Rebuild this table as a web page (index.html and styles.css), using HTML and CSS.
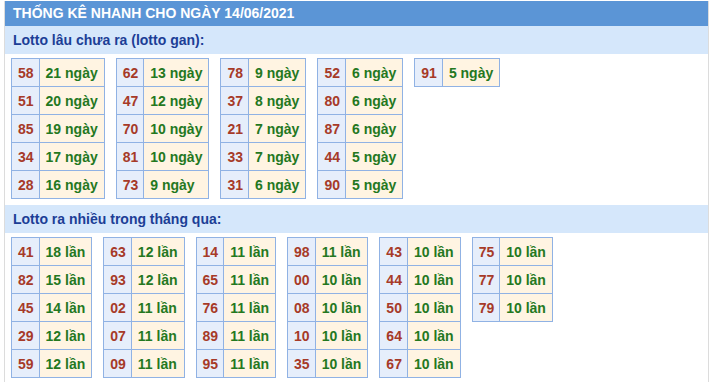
FILE: index.html
```html
<!DOCTYPE html>
<html lang="vi">
<head>
<meta charset="utf-8">
<link rel="stylesheet" href="styles.css">
</head>
<body>
<div class="box">
  <div class="title">THỐNG KÊ NHANH CHO NGÀY 14/06/2021</div>
  <div class="sub">Lotto lâu chưa ra (lotto gan):</div>
  <div class="tables">
    <table><tr><td class="n">58</td><td class="v">21 ngày</td></tr><tr><td class="n">51</td><td class="v">20 ngày</td></tr><tr><td class="n">85</td><td class="v">19 ngày</td></tr><tr><td class="n">34</td><td class="v">17 ngày</td></tr><tr><td class="n">28</td><td class="v">16 ngày</td></tr></table>
    <table><tr><td class="n">62</td><td class="v">13 ngày</td></tr><tr><td class="n">47</td><td class="v">12 ngày</td></tr><tr><td class="n">70</td><td class="v">10 ngày</td></tr><tr><td class="n">81</td><td class="v">10 ngày</td></tr><tr><td class="n">73</td><td class="v">9 ngày</td></tr></table>
    <table><tr><td class="n">78</td><td class="v">9 ngày</td></tr><tr><td class="n">37</td><td class="v">8 ngày</td></tr><tr><td class="n">21</td><td class="v">7 ngày</td></tr><tr><td class="n">33</td><td class="v">7 ngày</td></tr><tr><td class="n">31</td><td class="v">6 ngày</td></tr></table>
    <table><tr><td class="n">52</td><td class="v">6 ngày</td></tr><tr><td class="n">80</td><td class="v">6 ngày</td></tr><tr><td class="n">87</td><td class="v">6 ngày</td></tr><tr><td class="n">44</td><td class="v">5 ngày</td></tr><tr><td class="n">90</td><td class="v">5 ngày</td></tr></table>
    <table><tr><td class="n">91</td><td class="v">5 ngày</td></tr></table>
  </div>
  <div class="sub sub2">Lotto ra nhiều trong tháng qua:</div>
  <div class="tables last">
    <table><tr><td class="n">41</td><td class="v">18 lần</td></tr><tr><td class="n">82</td><td class="v">15 lần</td></tr><tr><td class="n">45</td><td class="v">14 lần</td></tr><tr><td class="n">29</td><td class="v">12 lần</td></tr><tr><td class="n">59</td><td class="v">12 lần</td></tr></table>
    <table><tr><td class="n">63</td><td class="v">12 lần</td></tr><tr><td class="n">93</td><td class="v">12 lần</td></tr><tr><td class="n">02</td><td class="v">11 lần</td></tr><tr><td class="n">07</td><td class="v">11 lần</td></tr><tr><td class="n">09</td><td class="v">11 lần</td></tr></table>
    <table><tr><td class="n">14</td><td class="v">11 lần</td></tr><tr><td class="n">65</td><td class="v">11 lần</td></tr><tr><td class="n">76</td><td class="v">11 lần</td></tr><tr><td class="n">89</td><td class="v">11 lần</td></tr><tr><td class="n">95</td><td class="v">11 lần</td></tr></table>
    <table><tr><td class="n">98</td><td class="v">11 lần</td></tr><tr><td class="n">00</td><td class="v">10 lần</td></tr><tr><td class="n">08</td><td class="v">10 lần</td></tr><tr><td class="n">10</td><td class="v">10 lần</td></tr><tr><td class="n">35</td><td class="v">10 lần</td></tr></table>
    <table><tr><td class="n">43</td><td class="v">10 lần</td></tr><tr><td class="n">44</td><td class="v">10 lần</td></tr><tr><td class="n">50</td><td class="v">10 lần</td></tr><tr><td class="n">64</td><td class="v">10 lần</td></tr><tr><td class="n">67</td><td class="v">10 lần</td></tr></table>
    <table><tr><td class="n">75</td><td class="v">10 lần</td></tr><tr><td class="n">77</td><td class="v">10 lần</td></tr><tr><td class="n">79</td><td class="v">10 lần</td></tr></table>
  </div>
</div>
</body>
</html>
```
FILE: styles.css
```css
html, body {
  margin: 0;
  padding: 0;
  background: #fff;
}
body {
  font-family: "Liberation Sans", Arial, sans-serif;
  font-weight: bold;
  font-size: 14px;
}
.box {
  margin: 1px 0 0 4px;
  width: 703px;
  border-left: 1px solid #dcdcdc;
  border-right: 1px solid #dcdcdc;
  padding-bottom: 4px;
}
.title {
  height: 25px;
  line-height: 25px;
  background: #5b95d6;
  color: #fff;
  padding-left: 8px;
}
.sub {
  height: 28px;
  line-height: 28px;
  background: #d5e7fb;
  color: #1c3e96;
  padding-left: 8px;
  font-size: 14px;
}
.sub2 {
  margin-top: 6px;
}
.tables {
  display: flex;
  align-items: flex-start;
  gap: 11px;
  padding: 4px 0 0 6px;
}
table {
  border-collapse: collapse;
}
td {
  height: 27px;
  border: 1px solid #90b2e4;
  white-space: nowrap;
}
td.n {
  background: #e6eefb;
  color: #a63a28;
  padding: 0 5px 0 6px;
}
td.v {
  background: #fff4e2;
  color: #24781f;
  padding: 0 6px 0 6px;
}
```
